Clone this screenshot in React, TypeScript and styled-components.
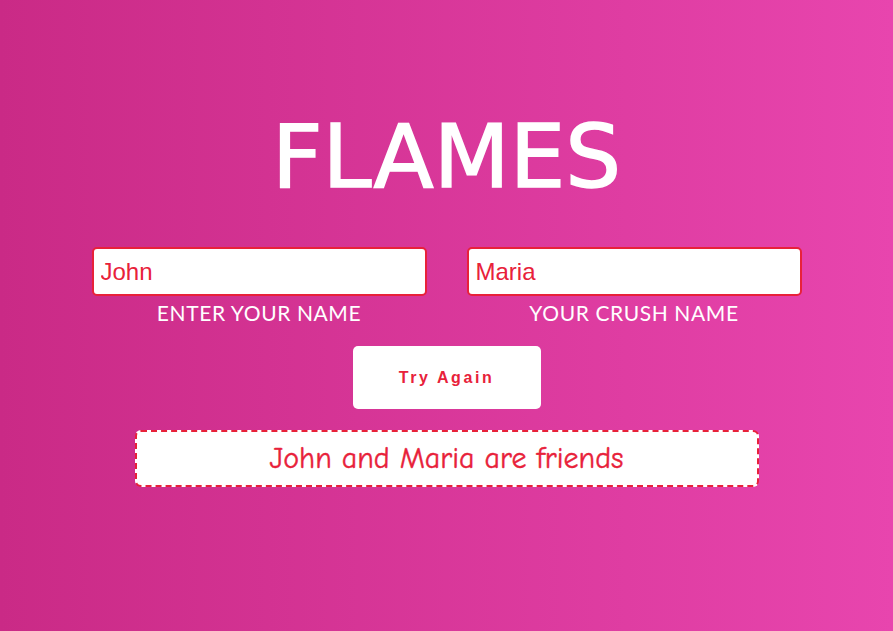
import React from "react";
import styled, { createGlobalStyle } from "styled-components";

const Global = createGlobalStyle`
  html, body { margin: 0; padding: 0; }
  body { font-family: "Liberation Sans", Arial, sans-serif; }
`;

const Page = styled.div`
  width: 100%;
  height: 631px;
  background: linear-gradient(to right, #ca2a86, #e845ae);
  display: flex;
  flex-direction: column;
  align-items: center;
  box-sizing: border-box;
  padding-top: 112px;
`;

const Title = styled.h1`
  margin: 0;
  font-family: "DejaVu Sans", sans-serif;
  font-weight: 400;
  font-size: 88px;
  line-height: 90px;
  letter-spacing: 0;
  color: #ffffff;
  -webkit-text-stroke: 1.5px #ffffff;
`;

const InputRow = styled.div`
  display: flex;
  gap: 40px;
  margin-top: 45px;
`;

const Field = styled.div`
  display: flex;
  flex-direction: column;
  align-items: center;
  width: 335px;
`;

const NameInput = styled.input`
  width: 335px;
  height: 49px;
  box-sizing: border-box;
  border: 2px solid #e8213a;
  border-radius: 5px;
  background: #fff;
  padding: 0 7px;
  font-family: "Liberation Sans", Arial, sans-serif;
  font-size: 24px;
  color: #e8213a;
  outline: none;
`;

const Label = styled.div`
  font-family: "Lato", sans-serif;
  font-size: 21px;
  letter-spacing: 0.6px;
  color: #ffffff;
  margin-top: 4px;
  line-height: 26px;
`;

const Button = styled.button`
  margin-top: 20px;
  width: 188px;
  height: 63px;
  border: none;
  border-radius: 5px;
  background: #fff;
  color: #e8213a;
  font-family: "Liberation Sans", Arial, sans-serif;
  font-weight: 700;
  font-size: 16px;
  letter-spacing: 2.6px;
  cursor: pointer;
`;

const Result = styled.div`
  margin-top: 21px;
  width: 624px;
  height: 57px;
  box-sizing: border-box;
  border: 2px dashed #e8213a;
  border-radius: 6px;
  background: #fff;
  display: flex;
  align-items: center;
  justify-content: center;
  font-family: "Comic Sans MS", "Comic Neue", cursive;
  font-size: 30px;
  color: #e8213a;
  -webkit-text-stroke: 0.4px #e8213a;
`;

export default function App() {
  return (
    <>
      <Global />
      <Page>
        <Title>FLAMES</Title>
        <InputRow>
          <Field>
            <NameInput defaultValue="John" />
            <Label>ENTER YOUR NAME</Label>
          </Field>
          <Field>
            <NameInput defaultValue="Maria" />
            <Label>YOUR CRUSH NAME</Label>
          </Field>
        </InputRow>
        <Button>Try Again</Button>
        <Result>John and Maria are friends</Result>
      </Page>
    </>
  );
}
